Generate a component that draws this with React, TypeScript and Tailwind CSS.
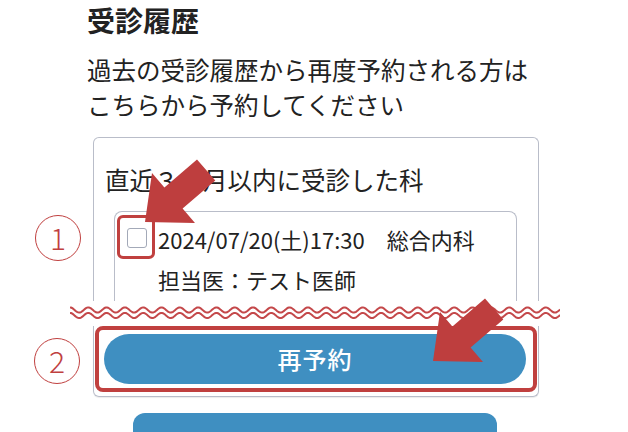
import React from "react";

// wavy "cut" line, crest at x = 0
const wavePath = (cy: number, width: number, period: number, amp: number) => {
  let d = `M0,${(cy - amp).toFixed(2)}`;
  for (let x = 1; x <= width; x++) {
    const y = cy - amp * Math.cos((2 * Math.PI * x) / period);
    d += ` L${x},${y.toFixed(2)}`;
  }
  return d;
};

// arrow pointing down-left, tip at the origin
const ARROW = "0,0 7,-49 19.4,-34.6 52,-62.6 70.3,-41.4 37.6,-13.4 50,1";

const CircledNumber: React.FC<{ n: string; className: string }> = ({ n, className }) => (
  <div
    className={`absolute flex h-[46px] w-[46px] items-center justify-center rounded-full border-[1.5px] border-[#c0403f] text-[30px] font-light leading-none text-[#c0403f] ${className}`}
  >
    <span className="-mt-[2px]">{n}</span>
  </div>
);

export default function App() {
  return (
    <div className="relative h-[432px] w-[628px] overflow-hidden bg-white font-['Noto_Sans_CJK_JP',sans-serif] text-[#222]">
      <div className="pl-[87px]">
        <h2 className="text-[28px] font-bold leading-[40px]">受診履歴</h2>
        <p className="mt-[12px] text-[24.5px] leading-[35px]">
          過去の受診履歴から再度予約される方は
          <br />
          こちらから予約してください
        </p>

        {/* card, upper part (cut off below) */}
        <div className="ml-[6px] mt-[15px] w-[446px] rounded-t-md border border-b-0 border-[#b9bdc9] pt-[24px]">
          <h3 className="pl-[11px] text-[24.5px] leading-[35px]">直近３ヶ月以内に受診した科</h3>
          <div className="ml-[20px] mt-[14px] w-[403px] rounded-t-lg border border-b-0 border-[#b9bdc9] pb-[2px] pl-[12px] pt-[7px]">
            <div className="grid grid-cols-[20px_1fr] gap-x-[11px] text-[22px] leading-[40px]">
              <div className="flex items-center">
                <span className="mt-[-3px] block h-[20px] w-[20px] rounded-[3px] border-[1.5px] border-[#a3a9b8] bg-white" />
              </div>
              <div>2024/07/20(土)17:30　総合内科</div>
              <div />
              <div>担当医：テスト医師</div>
            </div>
          </div>
        </div>
      </div>

      {/* wavy cut */}
      <div className="h-[25px] bg-white pl-[70px]">
        <svg width="490" height="25" viewBox="0 0 490 25" className="block">
          <path d={wavePath(9, 490, 18.3, 2.6)} fill="none" stroke="#c4484a" strokeWidth="2" />
          <path d={wavePath(14.5, 490, 18.3, 2.6)} fill="none" stroke="#c4484a" strokeWidth="2" />
        </svg>
      </div>

      <div className="pl-[87px]">
        {/* card, lower part */}
        <div className="ml-[6px] w-[446px] rounded-b-md border border-t-0 border-[#b9bdc9] px-[1px] pb-[4px] shadow-[0_1px_1px_rgba(0,0,0,0.08)]">
          <div className="rounded-lg border-[4px] border-[#c0403f] py-[4px] pl-[5px] pr-[7px]">
            <button className="flex h-[50px] w-full items-center justify-center rounded-full bg-[#3f8fc1] text-[24px] font-medium tracking-[1px] text-white">
              再予約
            </button>
          </div>
        </div>
        <div className="ml-[46px] mt-[16px] h-[40px] w-[364px] rounded-t-xl bg-[#3f8fc1]" />
      </div>

      {/* annotations */}
      <CircledNumber n="1" className="left-[35px] top-[215px]" />
      <CircledNumber n="2" className="left-[34px] top-[338px]" />
      <div className="pointer-events-none absolute left-[117px] top-[215px] h-[44px] w-[38px] rounded-[6px] border-[3.5px] border-[#c0403f]" />
      <svg className="pointer-events-none absolute left-0 top-0" width="628" height="432" viewBox="0 0 628 432">
        <polygon points={ARROW} transform="translate(145 222)" fill="#be3e3e" />
        <polygon points={ARROW} transform="translate(433 361)" fill="#be3e3e" />
      </svg>
    </div>
  );
}
